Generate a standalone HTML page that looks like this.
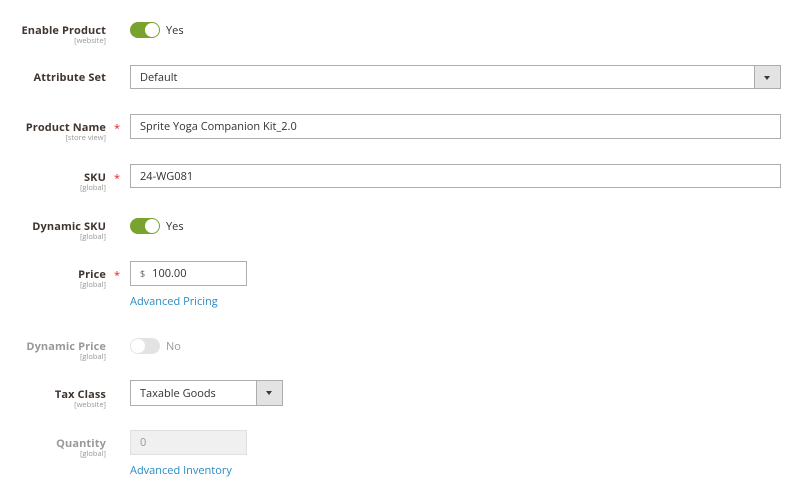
<!DOCTYPE html>
<html><head><style>
body{margin:0;width:800px;height:491px;background:#fff;font-family:"Open Sans","Liberation Sans",sans-serif;color:#303030;position:relative;overflow:hidden}
.l{position:absolute;right:694px;text-align:right;font-size:11px;font-weight:bold;color:#41362f;line-height:13px;white-space:nowrap;letter-spacing:0.1px}
.l small{display:block;font-size:7.5px;font-weight:normal;color:#999;line-height:9px;letter-spacing:0}
.l.d{color:#999}
.st{position:absolute;left:114px;color:#e22626;font-size:11px}
.in{position:absolute;left:130px;height:24px;border:1px solid #adadad;box-sizing:border-box;font-size:11px;line-height:24px;padding-left:9px;background:#fff}
.btn{position:absolute;right:0;top:0;bottom:0;width:25px;background:#e3e3e3;border-left:1px solid #adadad}
.btn:after{content:"";position:absolute;left:9px;top:10px;border-left:3.5px solid transparent;border-right:3.5px solid transparent;border-top:4px solid #41362f}
.tg{position:absolute;left:130px;width:30px;height:16px;border-radius:8px;background:#79a22e}
.tg:after{content:"";position:absolute;right:1px;top:1px;width:14px;height:14px;border-radius:50%;background:#fff}
.tg.off{background:#e3e3e3}
.tg.off:after{right:auto;left:1px}
.tt{position:absolute;left:166px;font-size:11px;line-height:13px}
.a{position:absolute;left:130px;font-size:11px;color:#2a8bc2;line-height:13px}
</style></head><body>
<div class="l" style="top:24px">Enable Product<small>[website]</small></div>
<div class="tg" style="top:22px"></div><div class="tt" style="top:24px">Yes</div>

<div class="l" style="top:71px">Attribute Set</div>
<div class="in" style="top:65px;width:651px">Default<div class="btn"></div></div>

<div class="l" style="top:121px">Product Name<small>[store view]</small></div><div class="st" style="top:121px">*</div>
<div class="in" style="top:114px;width:651px;height:25px">Sprite Yoga Companion Kit_2.0</div>

<div class="l" style="top:171px">SKU<small>[global]</small></div><div class="st" style="top:171px">*</div>
<div class="in" style="top:164px;width:651px">24-WG081</div>

<div class="l" style="top:220px">Dynamic SKU<small>[global]</small></div>
<div class="tg" style="top:218px"></div><div class="tt" style="top:220px">Yes</div>

<div class="l" style="top:268px">Price<small>[global]</small></div><div class="st" style="top:268px">*</div>
<div class="in" style="top:261px;width:117px;height:25px"><span style="font-size:9px;color:#666;margin-right:7px">$</span>100.00</div>
<div class="a" style="top:295px">Advanced Pricing</div>

<div class="l d" style="top:340px">Dynamic Price<small>[global]</small></div>
<div class="tg off" style="top:338px"></div><div class="tt" style="top:340px;color:#999">No</div>

<div class="l" style="top:388px">Tax Class<small>[website]</small></div>
<div class="in" style="top:380px;width:153px;height:26px;line-height:26px">Taxable Goods<div class="btn"></div></div>

<div class="l d" style="top:437px">Quantity<small>[global]</small></div>
<div class="in" style="top:430px;width:117px;height:25px;background:#f0f0f0;border-color:#e0e0e0;color:#999">0</div>
<div class="a" style="top:464px">Advanced Inventory</div>
</body></html>
